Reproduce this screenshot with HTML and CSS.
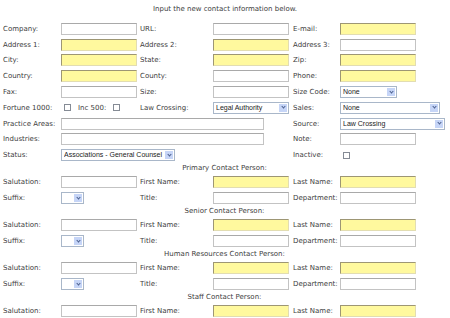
FILE: index.html
```html
<!DOCTYPE html>
<html lang="en">
<head>
    <meta charset="UTF-8">
    <title>New Contact</title>
    <link rel="stylesheet" href="styles.css">
</head>
<body>
    <p class="intro">Input the new contact information below.</p>

    <form class="contact-form">
        <div class="row">
            <label>Company:</label><input type="text">
            <label>URL:</label><input type="text">
            <label>E-mail:</label><input type="text" class="req">
        </div>
        <div class="row">
            <label>Address 1:</label><input type="text" class="req">
            <label>Address 2:</label><input type="text" class="req">
            <label>Address 3:</label><input type="text">
        </div>
        <div class="row">
            <label>City:</label><input type="text" class="req">
            <label>State:</label><input type="text" class="req">
            <label>Zip:</label><input type="text" class="req">
        </div>
        <div class="row">
            <label>Country:</label><input type="text" class="req">
            <label>County:</label><input type="text">
            <label>Phone:</label><input type="text" class="req">
        </div>
        <div class="row">
            <label>Fax:</label><input type="text">
            <label>Size:</label><input type="text">
            <label>Size Code:</label>
            <span class="select-wrap w-code"><select><option>None</option></select><span class="arrow"></span></span>
        </div>
        <div class="row">
            <label>Fortune 1000:</label>
            <span class="checks"><input type="checkbox"><label>Inc 500:</label><input type="checkbox"></span>
            <label>Law Crossing:</label>
            <span class="select-wrap w-mid"><select><option>Legal Authority</option></select><span class="arrow"></span></span>
            <label>Sales:</label>
            <span class="select-wrap w-sales"><select><option>None</option></select><span class="arrow"></span></span>
        </div>
        <div class="row">
            <label>Practice Areas:</label><input type="text" class="wide">
            <label>Source:</label>
            <span class="select-wrap w-source"><select><option>Law Crossing</option></select><span class="arrow"></span></span>
        </div>
        <div class="row">
            <label>Industries:</label><input type="text" class="wide">
            <label>Note:</label><input type="text">
        </div>
        <div class="row">
            <label>Status:</label>
            <span class="select-wrap w-status span-3"><select><option>Associations - General Counsel</option></select><span class="arrow"></span></span>
            <label>Inactive:</label>
            <span class="checks"><input type="checkbox"></span>
        </div>

        <div class="heading">Primary Contact Person:</div>
        <div class="row">
            <label>Salutation:</label><input type="text">
            <label>First Name:</label><input type="text" class="req">
            <label>Last Name:</label><input type="text" class="req">
        </div>
        <div class="row">
            <label>Suffix:</label>
            <span class="select-wrap w-suffix"><select><option></option></select><span class="arrow"></span></span>
            <label>Title:</label><input type="text">
            <label>Department:</label><input type="text">
        </div>

        <div class="heading">Senior Contact Person:</div>
        <div class="row">
            <label>Salutation:</label><input type="text">
            <label>First Name:</label><input type="text" class="req">
            <label>Last Name:</label><input type="text" class="req">
        </div>
        <div class="row">
            <label>Suffix:</label>
            <span class="select-wrap w-suffix"><select><option></option></select><span class="arrow"></span></span>
            <label>Title:</label><input type="text">
            <label>Department:</label><input type="text">
        </div>

        <div class="heading">Human Resources Contact Person:</div>
        <div class="row">
            <label>Salutation:</label><input type="text">
            <label>First Name:</label><input type="text" class="req">
            <label>Last Name:</label><input type="text" class="req">
        </div>
        <div class="row">
            <label>Suffix:</label>
            <span class="select-wrap w-suffix"><select><option></option></select><span class="arrow"></span></span>
            <label>Title:</label><input type="text">
            <label>Department:</label><input type="text">
        </div>

        <div class="heading">Staff Contact Person:</div>
        <div class="row">
            <label>Salutation:</label><input type="text">
            <label>First Name:</label><input type="text" class="req">
            <label>Last Name:</label><input type="text" class="req">
        </div>
    </form>
</body>
</html>
```
FILE: styles.css
```css
body {
    margin: 0;
    background-color: #ffffff;
    color: #3d3d3d;
    font-family: "DejaVu Sans", Verdana, sans-serif;
    font-size: 7px;
    overflow: hidden;
}

.intro {
    margin: 0;
    height: 21px;
    padding-top: 5px;
    box-sizing: border-box;
    text-align: center;
    line-height: 9px;
}

.contact-form {
    padding-left: 3px;
}

.row {
    display: grid;
    grid-template-columns: 58px 79px 73px 80px 47px 1fr;
    align-items: center;
    height: 15.8px;
}

.heading {
    height: 11.4px;
    line-height: 11px;
    text-align: center;
    padding-right: 4px;
}

label {
    white-space: nowrap;
}

input[type="text"] {
    width: 76px;
    height: 12px;
    margin: 0;
    padding: 0 2px;
    box-sizing: border-box;
    border: 1px solid #c3c3c3;
    border-top-color: #a9a9a9;
    background-color: #ffffff;
    font-size: 7px;
}

input.req {
    background-color: #fff99e;
    border-color: #9d9674 #e2ddb2 #e2ddb2 #9d9674;
}

input.wide {
    grid-column: span 3;
    width: 203px;
}

.checks {
    display: flex;
    align-items: center;
    gap: 7px;
    padding-left: 3px;
}

input[type="checkbox"] {
    appearance: none;
    width: 7px;
    height: 7px;
    margin: 0;
    border: 1px solid #858b95;
    background-color: #ffffff;
}

.select-wrap {
    position: relative;
    display: block;
    height: 12px;
}

.select-wrap select {
    appearance: none;
    width: 100%;
    height: 12px;
    margin: 0;
    padding: 0 0 0 2px;
    box-sizing: border-box;
    border: 1px solid #a9b7c9;
    background-color: #ffffff;
    color: #222222;
    font-family: "Liberation Sans", Arial, sans-serif;
    font-size: 7px;
    line-height: 10px;
}

.select-wrap .arrow {
    position: absolute;
    top: 2px;
    right: 2px;
    width: 8px;
    height: 8px;
    background-color: #c6d5f7;
}

.select-wrap .arrow::after {
    content: "";
    position: absolute;
    left: 2.5px;
    top: 1.5px;
    width: 2px;
    height: 2px;
    border-right: 1px solid #4b5f8e;
    border-bottom: 1px solid #4b5f8e;
    transform: rotate(45deg);
}

.w-code { width: 57px; }
.w-mid { width: 76px; }
.w-sales { width: 100px; }
.w-source { width: 105px; }
.w-status { width: 114px; }
.w-suffix { width: 23px; }

.span-3 {
    grid-column: span 3;
}
```
